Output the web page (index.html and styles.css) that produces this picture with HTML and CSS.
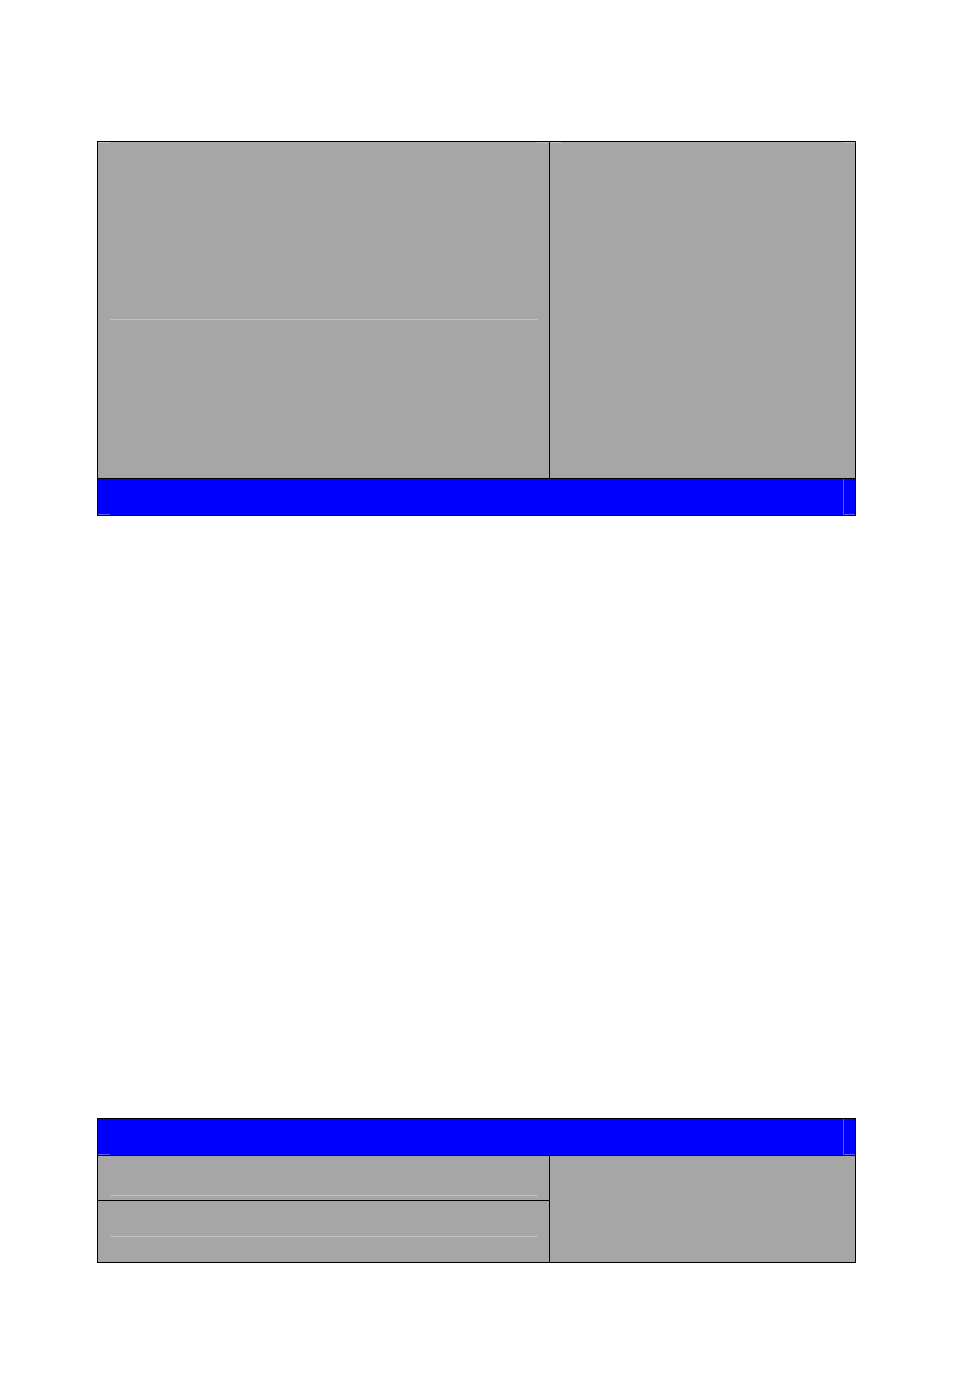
FILE: index.html
```html
<!DOCTYPE html>
<html lang="en">
<head>
<meta charset="utf-8">
<meta name="viewport" content="width=device-width, initial-scale=1">
<title>Setup screens</title>
<link rel="stylesheet" href="styles.css">
</head>
<body>
<main class="page">
  <section class="panel">
    <div class="cell cell-main ticks-both"><hr class="rule"></div>
    <div class="cell ticks-both"></div>
    <div class="bar"><span class="bar-end"></span></div>
  </section>
  <section class="panel">
    <div class="bar"><span class="bar-end"></span></div>
    <div class="cell cell-head"><hr class="rule"></div>
    <div class="cell cell-side"></div>
    <div class="cell cell-foot"><hr class="rule"></div>
  </section>
</main>
</body>
</html>
```
FILE: styles.css
```css
body {
  margin: 0;
  background: #fff;
}

.page {
  display: flex;
  flex-direction: column;
  gap: 602px;
  padding: 141px 98px 127px 97px;
}

/* The black ground shows through the gaps as cell borders. */
.panel {
  display: grid;
  grid-template-columns: 451fr 305fr;
  gap: 1px;
  padding: 1px;
  background: #000;
}

.cell {
  box-sizing: border-box;
  padding: 0 11px 0 12px;
  background: #a6a6a6;
}

.ticks-both {
  background:
    linear-gradient(#c0c0c0, #c0c0c0) left top / 12px 1px no-repeat,
    linear-gradient(#c0c0c0, #c0c0c0) right top / 12px 1px no-repeat,
    #a6a6a6;
}

.cell-main {
  padding-top: 177px;
  padding-bottom: 158px;
}

.cell-head {
  padding-top: 39px;
  padding-bottom: 4px;
}

.cell-foot {
  padding-top: 35px;
  padding-bottom: 25px;
}

.cell-side {
  grid-row: span 2;
}

.rule {
  height: 1px;
  margin: 0;
  border: 0;
  background: #c0c0c0;
}

.bar {
  grid-column: 1 / -1;
  display: flex;
  justify-content: flex-end;
  height: 36px;
  background:
    linear-gradient(#5959ff, #5959ff) left bottom / 12px 1px no-repeat,
    #00f;
}

.bar-end {
  box-sizing: border-box;
  width: 12px;
  border: solid #5959ff;
  border-width: 0 0 1px 1px;
}
```
